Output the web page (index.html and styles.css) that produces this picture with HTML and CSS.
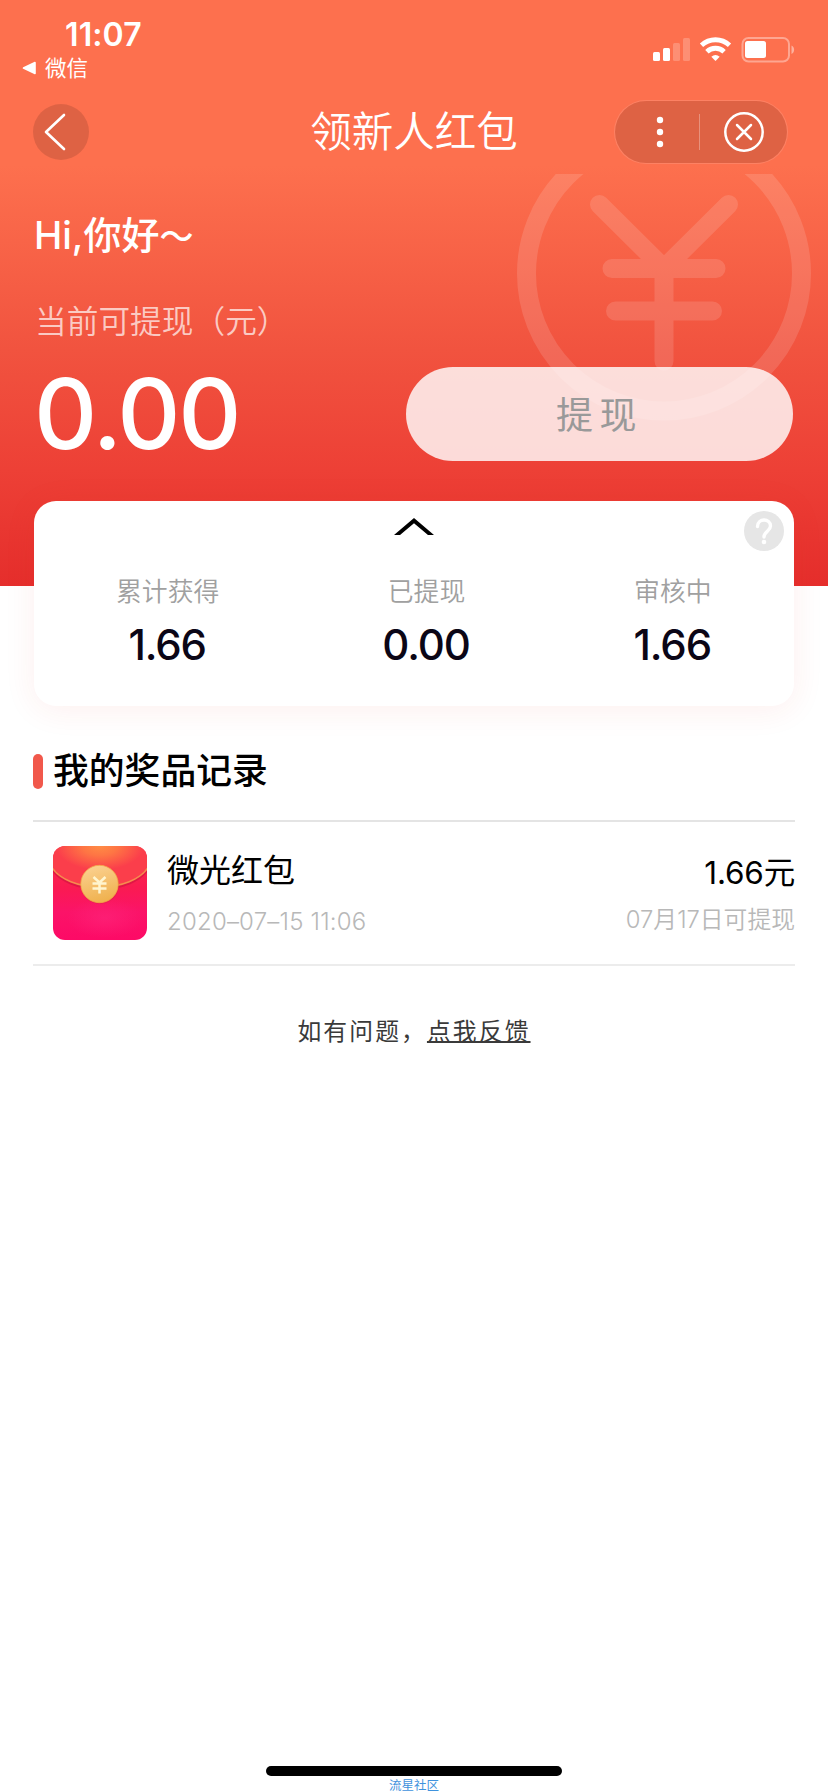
FILE: index.html
```html
<!DOCTYPE html>
<html lang="zh-CN">
<head>
<meta charset="utf-8">
<title>领新人红包</title>
<link rel="stylesheet" href="styles.css">
</head>
<body>
<div class="page">
  <header class="hero">
    <svg class="hero-mark" viewBox="0 0 296 248" aria-hidden="true">
      <g fill="none" stroke="#fff" stroke-width="19" stroke-linecap="round">
        <circle cx="148" cy="99.500" r="137.500"/>
        <path d="M83.500 30.500L148 94.500L212.500 30.500M96 94.500H200M99.500 137H196.500M148 94.500V187"/>
      </g>
    </svg>
    <div class="status">
      <div class="status-left">
        <div class="time">11:07</div>
        <div class="return"><svg class="return-arrow" viewBox="0 0 15 14"><path d="M1.500 7L13 1.500V12.500Z" fill="#fff" stroke="#fff" stroke-width="1.600" stroke-linejoin="round"/></svg><span>微信</span></div>
      </div>
      <div class="status-icons">
        <svg width="142" height="26" viewBox="0 0 142 26">
          <g fill="#fff">
            <rect x="0" y="15" width="7" height="9" rx="1.500"/>
            <rect x="10" y="11" width="7" height="13" rx="1.500"/>
            <rect x="20" y="6" width="7" height="18" rx="1.500" opacity=".22"/>
            <rect x="30" y="1" width="7" height="23" rx="1.500" opacity=".22"/>
            <path d="M62.500 24l-4.200-4.200a6.500 6.500 0 0 1 8.400 0z"/>
          </g>
          <g fill="none" stroke="#fff" stroke-width="4.800">
            <path d="M48.500 8.300a20.500 20.500 0 0 1 28 0"/>
            <path d="M53.900 14.700a12.400 12.400 0 0 1 17.200 0"/>
          </g>
          <rect x="89.500" y="1" width="46.500" height="23.500" rx="6" fill="none" stroke="#fff" stroke-width="2" opacity=".38"/>
          <rect x="92" y="4" width="21" height="17" rx="2.500" fill="#fff"/>
          <path d="M138.500 8.500c3.500 1.200 3.500 7.300 0 8.500z" fill="#fff" opacity=".45"/>
        </svg>
      </div>
    </div>
    <nav class="nav">
      <div class="back"><svg width="56" height="56" viewBox="0 0 56 56"><path d="M31 11L13 28L31 45" fill="none" stroke="#fff" stroke-width="2.600" stroke-linecap="round" stroke-linejoin="round"/></svg></div>
      <h1 class="title">领新人红包</h1>
      <div class="capsule">
        <svg width="172" height="62" viewBox="0 0 172 62">
          <g fill="#fff"><circle cx="45" cy="19" r="3.200"/><circle cx="45" cy="31" r="3.200"/><circle cx="45" cy="43" r="3.200"/></g>
          <path d="M84.500 13V49" stroke="#fff" stroke-opacity=".3"/>
          <g fill="none" stroke="#fff" stroke-width="2.500" stroke-linecap="round"><circle cx="129" cy="31" r="18.700"/><path d="M122 24L136 38M136 24L122 38"/></g>
        </svg>
      </div>
    </nav>
    <div class="hello">Hi,你好<span class="tilde">～</span></div>
    <div class="balance-label">当前可提现（元）</div>
    <div class="balance-row">
      <div class="balance">0.00</div>
      <button class="withdraw">提现</button>
    </div>
  </header>

  <section class="card">
    <svg class="card-arrow" width="40" height="18" viewBox="0 0 40 18"><path d="M0 17L20 0L40 17H34L20 5.200L6 17Z" fill="#000"/></svg>
    <svg class="help" width="40" height="40" viewBox="0 0 40 40"><circle cx="20" cy="20" r="20" fill="#e6e6e6"/><path d="M13.500 15.500C13.500 7 26.500 7 26.500 15C26.500 20 20 20.500 20 26" fill="none" stroke="#fff" stroke-width="3.400" stroke-linecap="round"/><circle cx="20" cy="31" r="2.300" fill="#fff"/></svg>
    <div class="stats">
      <div class="stat stat-total"><span class="stat-label">累计获得</span><span class="stat-value">1.66</span></div>
      <div class="stat stat-paid"><span class="stat-label">已提现</span><span class="stat-value">0.00</span></div>
      <div class="stat stat-pending"><span class="stat-label">审核中</span><span class="stat-value">1.66</span></div>
    </div>
  </section>

  <main class="records">
    <h2 class="records-title">我的奖品记录</h2>
    <div class="record">
      <svg class="packet" width="94" height="94" viewBox="0 0 94 94">
        <defs>
          <clipPath id="packetClip"><rect width="94" height="94" rx="12"/></clipPath>
          <linearGradient id="packetBody" x1="0" y1="0" x2="0" y2="1"><stop offset="0" stop-color="#f92f48"/><stop offset=".45" stop-color="#fa1a52"/><stop offset=".7" stop-color="#fb1368"/><stop offset="1" stop-color="#fd0a66"/></linearGradient>
          <radialGradient id="packetFlap" gradientUnits="userSpaceOnUse" cx="0" cy="0" r="1" gradientTransform="translate(47 0) scale(44 24)"><stop offset="0" stop-color="#ff8c45"/><stop offset=".4" stop-color="#fe7544"/><stop offset="1" stop-color="#fb3e4b"/></radialGradient>
          <linearGradient id="coin" x1=".3" y1="0" x2=".6" y2="1"><stop offset="0" stop-color="#fbd190"/><stop offset="1" stop-color="#efb04c"/></linearGradient>
          <radialGradient id="packetGlow" cx=".5" cy=".5" r=".5"><stop offset="0" stop-color="#ff2a80" stop-opacity=".5"/><stop offset="1" stop-color="#ff2a80" stop-opacity="0"/></radialGradient>
        </defs>
        <g clip-path="url(#packetClip)">
          <rect width="94" height="94" fill="url(#packetBody)"/>
          <ellipse cx="52" cy="72" rx="38" ry="20" fill="url(#packetGlow)"/>
          <path d="M-2 20C14 48 80 48 96 20" fill="none" stroke="#b90f35" stroke-opacity=".4" stroke-width="2.500" transform="translate(0 1.500)"/>
          <path d="M-2 -2V20C14 48 80 48 96 20V-2Z" fill="url(#packetFlap)" stroke="#f58a4e" stroke-width="1.600"/>
        </g>
        <circle cx="47" cy="39" r="19" fill="#c8283a" opacity=".3"/>
        <circle cx="46.500" cy="38" r="18.700" fill="url(#coin)" stroke="#f3a746" stroke-width=".8"/>
        <path d="M40.500 31L46.500 36.500L52.500 31M39.500 37.500H53.500M39.500 42.500H53.500M46.500 36.500V47.500" fill="none" stroke="#fff5cf" stroke-width="2.500"/>
      </svg>
      <div class="record-main">
        <div class="record-name">微光红包</div>
        <div class="record-date">2020–07–15 11:06</div>
      </div>
      <div class="record-side">
        <div class="record-amount">1.66元</div>
        <div class="record-note">07月17日可提现</div>
      </div>
    </div>
    <p class="feedback">如有问题，<a class="feedback-link">点我反馈</a></p>
  </main>

  <footer class="footer">
    <div class="home-bar"></div>
    <div class="community">流星社区</div>
  </footer>
</div>
</body>
</html>
```

FILE: styles.css
```css
* { box-sizing: border-box; }

body {
  margin: 0;
  background: #fff;
  font-family: Inter, "Noto Sans CJK SC", sans-serif;
  color: #000;
}

.page {
  width: 828px;
  height: 1792px;
  display: flex;
  flex-direction: column;
  overflow: hidden;
}

.hero {
  position: relative;
  height: 586px;
  flex: none;
  color: #fff;
  background: linear-gradient(#fd704e 0, #fd704e 165px, #f1533f 350px, #ed4036 470px, #e52e2c 586px);
}

.hero-mark {
  position: absolute;
  left: 516px;
  top: 174px;
  width: 296px;
  height: 248px;
  opacity: .13;
}

.status {
  height: 100px;
  padding: 17px 33px 0 22px;
  display: flex;
  justify-content: space-between;
}

.time {
  padding-left: 43px;
  font-size: 32px;
  line-height: 36px;
  font-weight: 600;
  letter-spacing: .1px;
}

.return {
  display: flex;
  align-items: center;
  gap: 8px;
  font-size: 21.500px;
  line-height: 30px;
  font-weight: 400;
}

.return-arrow { width: 15px; height: 14px; }
.status-icons { padding-top: 20px; }
.status-icons svg { display: block; }

.nav {
  height: 64px;
  padding: 0 40px 0 33px;
  display: grid;
  grid-template-columns: 174px 1fr 174px;
  align-items: center;
}

.back {
  width: 56px;
  height: 56px;
  border-radius: 50%;
  background: rgba(0, 0, 0, .12);
}

.title {
  margin: 0 0 0 7px;
  text-align: center;
  font-size: 41.500px;
  line-height: 60px;
  font-weight: 350;
}

.capsule {
  width: 174px;
  height: 64px;
  border: 1px solid rgba(255, 255, 255, .12);
  border-radius: 32px;
  background: rgba(0, 0, 0, .12);
  background-clip: padding-box;
}

.capsule svg { display: block; }

.hello {
  height: 48px;
  margin: 47px 0 0 34px;
  font-size: 38px;
  line-height: 48px;
  font-weight: 500;
}

.tilde {
  font-size: 34px;
  line-height: 1;
}

.balance-label {
  margin: 39px 0 0 35px;
  font-size: 31.700px;
  line-height: 48px;
  font-weight: 350;
  color: rgba(255, 255, 255, .7);
}

.balance-row {
  position: relative;
  margin-top: 21px;
  padding: 0 35px 0 34px;
  display: flex;
  justify-content: space-between;
  align-items: center;
}

.balance {
  font-size: 98px;
  line-height: 94px;
  font-weight: 550;
  letter-spacing: -2.200px;
}

.withdraw {
  width: 387px;
  height: 94px;
  padding: 0 0 2px;
  border: 0;
  border-radius: 47px;
  background: rgba(255, 255, 255, .81);
  color: #999;
  font-family: inherit;
  font-size: 37px;
  letter-spacing: 6.500px;
}

.card {
  position: relative;
  flex: none;
  width: 760px;
  height: 205px;
  margin: -85px 0 0 34px;
  border-radius: 22px;
  background: #fff;
  box-shadow: 0 4px 32px rgba(229, 46, 44, .08);
}

.card-arrow {
  position: absolute;
  left: 360px;
  top: 17px;
}

.help {
  position: absolute;
  right: 10px;
  top: 10px;
}

.stats {
  padding-top: 71px;
  display: flex;
  justify-content: space-around;
}

.stat {
  display: flex;
  flex-direction: column;
  align-items: center;
  white-space: nowrap;
}

.stat-total { width: 103px; }
.stat-paid { width: 86px; }
.stat-pending { width: 78px; }

.stat-label {
  font-size: 25.800px;
  line-height: 40px;
  font-weight: 350;
  color: #a0a0a0;
}

.stat-value {
  margin: 8px 1px 0 0;
  font-size: 42px;
  line-height: 50px;
  font-weight: 550;
  letter-spacing: -1.100px;
  color: #0b0616;
}

.records { padding: 40px 33px 0; }

.records-title {
  margin: 0;
  padding-bottom: 24px;
  display: flex;
  align-items: center;
  gap: 10px;
  border-bottom: 2px solid #e4e4e4;
  font-size: 35.800px;
  line-height: 50px;
  font-weight: 500;
}

.records-title::before {
  content: "";
  width: 10px;
  height: 35px;
  border-radius: 5px;
  background: #f1584b;
}

.record {
  height: 144px;
  padding-left: 20px;
  display: flex;
  align-items: center;
  border-bottom: 2px solid #ececec;
}

.record-main { margin-left: 20px; }

.record-name {
  font-size: 32px;
  line-height: 48px;
}

.record-date {
  margin-top: 9px;
  font-size: 24px;
  line-height: 36px;
  font-weight: 350;
  letter-spacing: .2px;
  color: #b8b8b8;
}

.record-side {
  margin-left: auto;
  text-align: right;
}

.record-amount {
  font-size: 31.500px;
  line-height: 48px;
  letter-spacing: -.2px;
}

.record-note {
  margin-top: 5px;
  font-size: 23.800px;
  line-height: 36px;
  font-weight: 350;
  color: #b8b8b8;
}

.feedback {
  margin: 46px 0 0;
  text-align: center;
  font-size: 23.800px;
  line-height: 40px;
  letter-spacing: 2.100px;
  color: #3a3a3a;
}

.feedback-link {
  text-decoration: underline;
  text-decoration-thickness: 2px;
}

.footer {
  margin-top: auto;
  height: 26px;
  flex: none;
  display: flex;
  flex-direction: column;
  align-items: center;
}

.home-bar {
  width: 296px;
  height: 10px;
  flex: none;
  border-radius: 5px;
  background: #000;
}

.community {
  margin-top: 3px;
  font-size: 12.500px;
  line-height: 13px;
  color: #3f92dd;
}
```
